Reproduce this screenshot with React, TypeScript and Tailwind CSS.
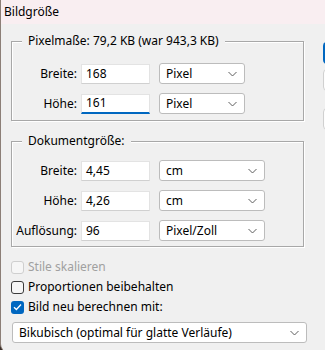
import type { ReactNode } from "react";

const font = { fontFamily: '"Noto Sans", "Liberation Sans", sans-serif' };

const Chevron = () => (
  <svg width="9" height="6" viewBox="0 0 9 6" className="shrink-0">
    <path d="M0.5 1 L4.5 5 L8.5 1" fill="none" stroke="#5f5f5f" strokeWidth="1" />
  </svg>
);

const Dropdown = ({ value, width }: { value: string; width: string }) => (
  <div
    className={`flex h-[21px] items-center justify-between rounded-[3px] border border-[#bcbcbc] bg-white pl-[6px] pr-[7px] ${width}`}
  >
    <span>{value}</span>
    <Chevron />
  </div>
);

const Field = ({
  label,
  value,
  unit,
  unitWidth,
  focused,
}: {
  label: string;
  value: string;
  unit: string;
  unitWidth: string;
  focused?: boolean;
}) => (
  <div className="flex items-center">
    <span className="w-[69px] pr-[4px] text-right">{label}</span>
    <div
      className={`flex h-[20px] w-[69px] items-center border border-[#e3e3e3] bg-white pl-[4px] ${
        focused ? "border-b-2 border-b-[#0067c0]" : "border-b-[#d0d0d0]"
      }`}
    >
      {value}
    </div>
    <div className="ml-[9px]">
      <Dropdown value={unit} width={unitWidth} />
    </div>
  </div>
);

const Group = ({ title, children, className }: { title: string; children: ReactNode; className?: string }) => (
  <fieldset
    className={`w-[293px] border border-[#a8a8a8] shadow-[inset_1px_1px_0_#ffffff,1px_1px_0_#ffffff] ${className ?? ""}`}
  >
    <legend className="ml-[10px] bg-[#f0f0f0] px-[6px] leading-[16px]">{title}</legend>
    {children}
  </fieldset>
);

const Checkbox = ({ label, checked, disabled }: { label: string; checked?: boolean; disabled?: boolean }) => (
  <div className="flex h-[20px] items-center">
    {checked ? (
      <div className="flex h-[13px] w-[13px] items-center justify-center rounded-[3px] bg-[#0067c0]">
        <svg width="9" height="8" viewBox="0 0 9 8">
          <path d="M1 4.2 L3.4 6.5 L8 1.5" fill="none" stroke="#ffffff" strokeWidth="1.3" />
        </svg>
      </div>
    ) : (
      <div
        className={`h-[13px] w-[13px] rounded-[3px] border bg-[#f6f6f6] ${
          disabled ? "border-[#cfcfcf]" : "border-[#3b3b3b]"
        }`}
      />
    )}
    <span className={`ml-[4px] ${disabled ? "text-[#a0a0a0]" : "text-black"}`}>{label}</span>
  </div>
);

export default function App() {
  return (
    <div className="h-[350px] w-[325px] overflow-hidden bg-[#3c302a] text-[12px] leading-[16px] text-black" style={font}>
      <div className="flex h-[352px] flex-col overflow-hidden rounded-bl-[8px] border-l border-[#8c7f77] bg-[#f0f0f0]">
        <div className="flex h-[24px] items-center bg-[#f9eef1] pl-[3px] text-[12px]">Bildgröße</div>
        <div className="flex">
          <div className="w-[311px] shrink-0 pl-[10px] pt-[9px]">
            <Group title="Pixelmaße: 79,2 KB (war 943,3 KB)" className="pb-[6px]">
              <div className="mt-[14px] flex flex-col gap-[9px]">
                <Field label="Breite:" value="168" unit="Pixel" unitWidth="w-[86px]" />
                <Field label="Höhe:" value="161" unit="Pixel" unitWidth="w-[86px]" focused />
              </div>
            </Group>
            <Group title="Dokumentgröße:" className="mt-[12px] pb-[5px]">
              <div className="mt-[11px] flex flex-col gap-[9px]">
                <Field label="Breite:" value="4,45" unit="cm" unitWidth="w-[106px]" />
                <Field label="Höhe:" value="4,26" unit="cm" unitWidth="w-[106px]" />
                <Field label="Auflösung:" value="96" unit="Pixel/Zoll" unitWidth="w-[106px]" />
              </div>
            </Group>
            <div className="mt-[10px] flex flex-col">
              <Checkbox label="Stile skalieren" disabled />
              <Checkbox label="Proportionen beibehalten" />
              <Checkbox label="Bild neu berechnen mit:" checked />
            </div>
            <div className="ml-[1px] mt-[5px]">
              <Dropdown value="Bikubisch (optimal für glatte Verläufe)" width="w-[295px]" />
            </div>
          </div>
          <div className="ml-[11px] flex shrink-0 flex-col gap-[5px] pt-[18px]">
            <div className="h-[22px] w-[75px] rounded-[4px] border-2 border-[#0067c0] bg-[#fdfdfd]" />
            <div className="h-[22px] w-[75px] rounded-[4px] border border-[#d0d0d0] bg-[#fdfdfd]" />
            <div className="mt-[12px] h-[22px] w-[75px] rounded-[4px] border border-[#d0d0d0] bg-[#fdfdfd]" />
          </div>
        </div>
      </div>
    </div>
  );
}
